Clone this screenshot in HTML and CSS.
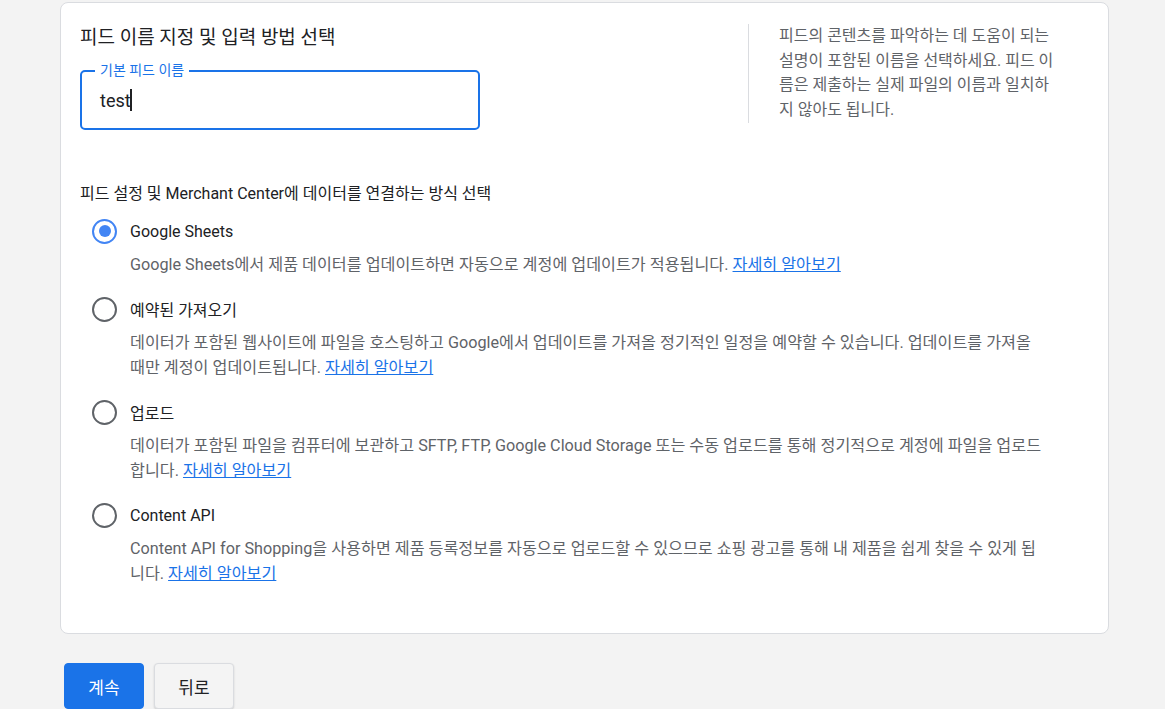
FILE: index.html
```html
<!DOCTYPE html>
<html>

<head>
    <title>피드 만들기</title>
    <link rel="stylesheet" href="styles.css">
</head>

<body>
    <div class="page">
        <div class="card">
            <div class="nameSection">
                <div class="nameLeft">
                    <div class="sectionTitle">피드 이름 지정 및 입력 방법 선택</div>
                    <div class="field">
                        <span class="fieldLabel">기본 피드 이름</span>
                        <div class="fieldValue">test<span class="caret"></span></div>
                    </div>
                </div>
                <div class="nameHelp">
                    피드의 콘텐츠를 파악하는 데 도움이 되는 설명이 포함된 이름을 선택하세요. 피드 이름은 제출하는 실제 파일의 이름과 일치하지 않아도 됩니다.
                </div>
            </div>

            <div class="methodTitle">피드 설정 및 Merchant Center에 데이터를 연결하는 방식 선택</div>

            <div class="option">
                <div class="optionRow">
                    <span class="radio checked"></span>
                    <span class="optionLabel">Google Sheets</span>
                </div>
                <div class="optionDesc">Google Sheets에서 제품 데이터를 업데이트하면 자동으로 계정에 업데이트가 적용됩니다. <a href="#">자세히 알아보기</a></div>
            </div>
            <div class="option">
                <div class="optionRow">
                    <span class="radio"></span>
                    <span class="optionLabel">예약된 가져오기</span>
                </div>
                <div class="optionDesc">데이터가 포함된 웹사이트에 파일을 호스팅하고 Google에서 업데이트를 가져올 정기적인 일정을 예약할 수 있습니다. 업데이트를 가져올 때만 계정이 업데이트됩니다. <a href="#">자세히 알아보기</a></div>
            </div>
            <div class="option">
                <div class="optionRow">
                    <span class="radio"></span>
                    <span class="optionLabel">업로드</span>
                </div>
                <div class="optionDesc">데이터가 포함된 파일을 컴퓨터에 보관하고 SFTP, FTP, Google Cloud Storage 또는 수동 업로드를 통해 정기적으로 계정에 파일을 업로드합니다. <a href="#">자세히 알아보기</a></div>
            </div>
            <div class="option">
                <div class="optionRow">
                    <span class="radio"></span>
                    <span class="optionLabel">Content API</span>
                </div>
                <div class="optionDesc">Content API for Shopping을 사용하면 제품 등록정보를 자동으로 업로드할 수 있으므로 쇼핑 광고를 통해 내 제품을 쉽게 찾을 수 있게 됩니다. <a href="#">자세히 알아보기</a></div>
            </div>
        </div>

        <div class="buttonBox">
            <button class="btn primary">계속</button>
            <button class="btn">뒤로</button>
        </div>
    </div>
</body>

</html>
```

FILE: styles.css
```css
body {
    margin: 0;
    background-color: #f3f3f3;
    font-family: Roboto, "Noto Sans CJK KR", sans-serif;
    color: #202124;
    overflow: hidden;
}

.page {
    padding: 2px 0 0 60px;
}

.card {
    width: 1049px;
    background-color: white;
    border: 1px solid #dadce0;
    border-radius: 8px;
    padding: 23px 0 27px 19px;
    box-sizing: border-box;
}

/* 피드 이름 */
.nameSection {
    display: flex;
}

.nameLeft {
    width: 668px;
}

.sectionTitle {
    font-size: 19px;
    line-height: 24px;
    margin-bottom: 20px;
}

.field {
    position: relative;
    width: 400px;
    height: 60px;
    border: 2px solid #1a73e8;
    border-radius: 5px;
    box-sizing: border-box;
    display: flex;
    align-items: center;
    padding-left: 18px;
}

.fieldLabel {
    position: absolute;
    top: -11px;
    left: 13px;
    padding: 0 5px;
    background-color: white;
    color: #1a73e8;
    font-size: 14px;
    line-height: 18px;
}

.fieldValue {
    font-size: 18px;
    display: flex;
    align-items: center;
}

.caret {
    display: inline-block;
    width: 2px;
    height: 22px;
    background-color: #202124;
    margin-left: -1px;
}

.nameHelp {
    border-left: 1px solid #dadce0;
    margin-top: -2px;
    padding: 0 0 0 30px;
    width: 280px;
    height: 99px;
    font-size: 16px;
    line-height: 24.7px;
    color: #5f6368;
}

/* 입력 방법 */
.methodTitle {
    font-size: 16px;
    line-height: 20px;
    margin-top: 54px;
    margin-bottom: 15px;
}

.option {
    margin-bottom: 20px;
}

.optionRow {
    display: flex;
    align-items: center;
    height: 24px;
    padding-left: 12px;
}

.radio {
    width: 25px;
    height: 25px;
    border: 2px solid #5f6368;
    border-radius: 50%;
    box-sizing: border-box;
    position: relative;
    margin-right: 13px;
}

.radio.checked {
    border-color: #4285f4;
}

.radio.checked::after {
    content: "";
    position: absolute;
    left: 4.5px;
    top: 4.5px;
    width: 12px;
    height: 12px;
    border-radius: 50%;
    background-color: #4285f4;
}

.optionLabel {
    font-size: 16px;
}

.optionDesc {
    margin: 9px 0 0 50px;
    width: 914px;
    font-size: 16.2px;
    line-height: 25px;
    color: #5f6368;
}

.optionDesc a {
    color: #1a73e8;
}

/* 버튼 */
.buttonBox {
    display: flex;
    gap: 10px;
    margin: 29px 0 0 4px;
}

.btn {
    width: 80px;
    height: 46px;
    border: 1px solid #dadce0;
    border-radius: 4px;
    background-color: #f4f4f4;
    color: #202124;
    font-family: Roboto, "Noto Sans CJK KR", sans-serif;
    font-size: 17px;
    box-shadow: 0 1px 2px rgba(0, 0, 0, 0.15);
}

.btn.primary {
    background-color: #1a73e8;
    border-color: #1a73e8;
    color: white;
    box-shadow: none;
}
```
